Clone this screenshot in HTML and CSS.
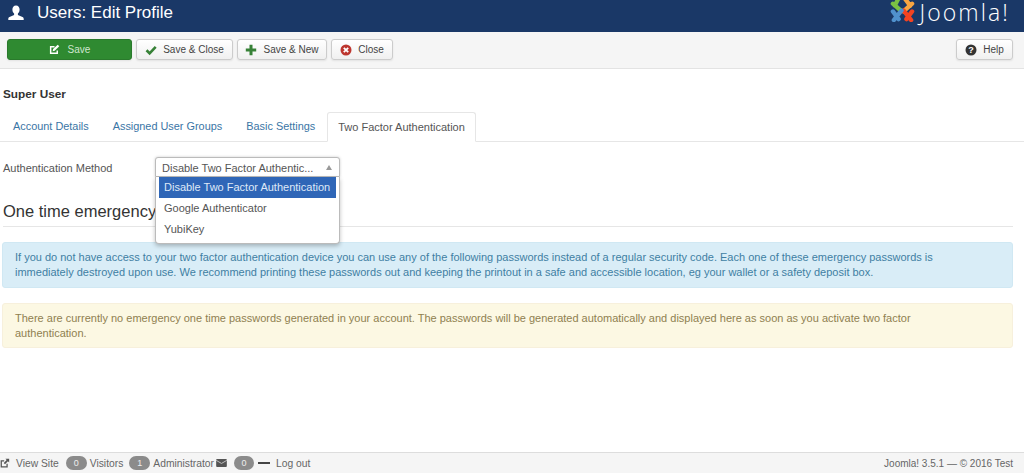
FILE: index.html
```html
<!DOCTYPE html>
<html lang="en">
<head>
<meta charset="utf-8">
<title>Users: Edit Profile</title>
<link rel="stylesheet" href="styles.css">
</head>
<body>
<div class="page">
  <header class="topbar">
    <svg class="user-icon" viewBox="0 0 16 16" width="16" height="16"><path fill="#fff" d="M8 0.5c2.3 0 3.6 1.7 3.6 4 0 1.7-.7 3.3-1.7 4.1v1.3l4.6 2c.8.4 1.2 1 1.2 2v1H0.300v-1c0-1 .4-1.600 1.200-2l4.600-2V8.600C5.100 7.800 4.400 6.200 4.400 4.500c0-2.300 1.300-4 3.600-4z"/></svg>
    <h1 class="title">Users: Edit Profile</h1>
    <div class="brand">
      <svg class="brand-mark" viewBox="0 0 26 26" width="25" height="25">
        <g fill="none" stroke-width="4.500" stroke-linecap="round">
          <path stroke="#7ac143" d="M3 7 L11 14 M9 1 L5 9"/>
          <path stroke="#f9a541" d="M23 7 L14 15 M15 1 L21 9"/>
          <path stroke="#f44321" d="M22 24 L14 14 M23 15 L17 23"/>
          <path stroke="#5091cd" d="M4 24 L12 14 M3 15 L9 23"/>
        </g>
      </svg>
      <span class="brand-name">Joomla!</span>
    </div>
  </header>

  <nav class="toolbar">
    <button class="btn btn-save" type="button">
      <svg viewBox="0 0 12 12" width="11" height="11"><path fill="none" stroke="#fff" stroke-width="1.600" d="M9 7v3.200H1.800V3H6"/><path fill="#fff" d="M4.500 5.500 9.500 .8l1.700 1.700-5 4.800-2.200.5z"/></svg>
      <span>Save</span>
    </button>
    <button class="btn w-close" type="button">
      <svg viewBox="0 0 12 12" width="12" height="12"><path fill="none" stroke="#378137" stroke-width="2.600" d="M1.500 6.300 4.600 9.300 10.700 2.800"/></svg>
      <span>Save &amp; Close</span>
    </button>
    <button class="btn w-new" type="button">
      <svg viewBox="0 0 12 12" width="12" height="12"><path fill="#378137" d="M4.500 .8h3v3.700h3.700v3H7.500v3.700h-3V7.500H.8v-3h3.700z"/></svg>
      <span>Save &amp; New</span>
    </button>
    <button class="btn w-cancel" type="button">
      <svg viewBox="0 0 12 12" width="12" height="12"><circle cx="6" cy="6" r="5.500" fill="#bd362f"/><path stroke="#fff" stroke-width="1.800" d="M3.800 3.800 8.200 8.200M8.200 3.800 3.800 8.200"/></svg>
      <span>Close</span>
    </button>
    <button class="btn w-help" type="button">
      <svg viewBox="0 0 12 12" width="12" height="12"><circle cx="6" cy="6" r="5.500" fill="#333"/><text x="6" y="9" class="help-q">?</text></svg>
      <span>Help</span>
    </button>
  </nav>

  <main class="content">
    <h2 class="user-name">Super User</h2>
    <ul class="tabs">
      <li class="tab">Account Details</li>
      <li class="tab">Assigned User Groups</li>
      <li class="tab">Basic Settings</li>
      <li class="tab tab-active">Two Factor Authentication</li>
    </ul>
    <div class="field">
      <label class="field-label">Authentication Method</label>
      <div class="select">
        <div class="select-head">
          <span>Disable Two Factor Authentic...</span>
          <i class="caret"></i>
        </div>
        <ul class="select-menu">
          <li class="option option-on">Disable Two Factor Authentication</li>
          <li class="option">Google Authenticator</li>
          <li class="option">YubiKey</li>
        </ul>
      </div>
    </div>
    <h3 class="section">One time emergency passwords</h3>
    <div class="alert alert-info">If you do not have access to your two factor authentication device you can use any of the following passwords instead of a regular security code. Each one of these emergency passwords is immediately destroyed upon use. We recommend printing these passwords out and keeping the printout in a safe and accessible location, eg your wallet or a safety deposit box.</div>
    <div class="alert alert-warn">There are currently no emergency one time passwords generated in your account. The passwords will be generated automatically and displayed here as soon as you activate two factor authentication.</div>
  </main>

  <footer class="status">
    <svg viewBox="0 0 12 12" width="10" height="10"><path fill="none" stroke="#555" stroke-width="1.500" d="M8.500 7v3.500H1.500V3.500H5"/><path fill="#555" d="M6.500 1H11v4.500L9.500 4 6 7.500 4.500 6 8 2.500z"/></svg>
    <span class="s-link s-view">View Site</span>
    <span class="badge">0</span><span class="s-link">Visitors</span>
    <span class="badge">1</span><span class="s-link s-admin">Administrator</span>
    <svg class="mail" viewBox="0 0 12 9" width="11" height="8"><rect width="12" height="9" rx="1" fill="#555"/><path d="M0 1.500 6 5l6-3.500" stroke="#ccc" fill="none"/></svg>
    <span class="badge">0</span>
    <i class="minus"></i>
    <span class="s-link">Log out</span>
    <span class="copy">Joomla! 3.5.1 — © 2016 Test</span>
  </footer>
</div>
</body>
</html>
```
FILE: styles.css
```css
* { box-sizing: border-box; }
html, body { margin: 0; padding: 0; }
body { background: #fff; font-family: "Liberation Sans", Arial, sans-serif; font-size: 11px; color: #555; }
ul { list-style: none; margin: 0; padding: 0; }
.page { width: 1024px; height: 473px; display: flex; flex-direction: column; overflow: hidden; }

.topbar { height: 32px; flex: none; background: #1a3867; display: flex; align-items: center; padding: 0 14px 7px 8px; overflow: hidden; }
.user-icon { flex: none; margin-right: 13px; }
.title { margin: 0; font-size: 17px; line-height: 20px; font-weight: 400; color: #fff; }
.brand { margin-left: auto; display: flex; align-items: flex-start; gap: 4px; height: 22px; }
.brand-mark { margin-top: -5px; }
.brand-name { font-family: "Open Sans", sans-serif; font-weight: 300; font-size: 23px; line-height: 20px; letter-spacing: 2.100px; color: #fff; }

.toolbar { height: 37px; flex: none; background: #f5f5f5; border-bottom: 1px solid #e3e3e3; display: flex; align-items: center; padding: 0 11px 1px 7px; gap: 4px; }
.btn { height: 21px; display: flex; align-items: center; justify-content: center; gap: 6px; padding: 0; background: linear-gradient(#fff, #f0f0f0); border: 1px solid #ccc; border-radius: 3px; box-shadow: 0 1px 2px rgba(0,0,0,.08); font: 10px "Liberation Sans", Arial, sans-serif; color: #444; }
.btn-save { width: 125px; background: #2f8a31; border-color: #2a7a2c; color: #cfe6cf; gap: 8px; }
.w-close { width: 97px; }
.w-new { width: 90px; }
.w-cancel { width: 62px; }
.w-help { width: 57px; margin-left: auto; }
.help-q { fill: #fff; font: bold 9px "Liberation Sans", sans-serif; text-anchor: middle; }

.content { flex: 1; padding: 0 11px 0 2px; }
.user-name { margin: 19px 0 0 1px; font-size: 11.800px; line-height: 13px; font-weight: 700; color: #333; }
.tabs { display: flex; margin: 11px -11px 0 -2px; padding-left: 1px; height: 30px; border-bottom: 1px solid #e6e6e6; }
.tab { padding: 0 12px; line-height: 28px; color: #3a75a5; font-size: 10.900px; }
.tab-active { height: 30px; background: #fff; border: 1px solid #e6e6e6; border-bottom-color: #fff; border-radius: 3px 3px 0 0; color: #555; padding: 0 10px; font-size: 11px; }

.field { display: flex; height: 20px; margin-top: 15px; position: relative; z-index: 2; }
.field-label { width: 153px; padding-top: 5px; padding-left: 1px; line-height: 13px; color: #555; }
.select { width: 185px; position: relative; }
.select-head { height: 20px; border: 1px solid #bbb; border-radius: 3px 3px 0 0; background: #fff; display: flex; align-items: center; justify-content: space-between; padding: 1px 7px 0 6px; color: #555; box-shadow: 0 0 3px rgba(0,0,0,.2); }
.caret { width: 0; height: 0; border: 3.500px solid transparent; border-top: 0; border-bottom: 5px solid #999; }
.select-menu { position: absolute; top: 20px; left: 0; width: 185px; height: 67px; background: #fff; border: 1px solid #bbb; border-top: 0; border-radius: 0 0 4px 4px; padding: 0 3px; box-shadow: 0 2px 4px rgba(0,0,0,.25); }
.option { height: 21px; line-height: 20px; padding: 0 5px; color: #555; white-space: nowrap; }
.option-on { background: #2f66b7; color: #dfe9f8; }

.section { margin: 23px 0 0 1px; font-size: 16.500px; line-height: 22px; font-weight: 400; color: #333; height: 27px; border-bottom: 1px solid #e6e6e6; }
.alert { padding: 7px 35px 7px 12px; line-height: 15px; border: 1px solid; border-radius: 3px; height: 46px; }
.alert-info { margin-top: 15px; background: #d9edf7; border-color: #d0e8f3; color: #3f7fa3; }
.alert-warn { margin-top: 15px; height: 45px; background: #fcf8e3; border-color: #f7f0dc; color: #8f8050; }

.status { height: 21px; flex: none; background: #f5f5f5; border-top: 1px solid #ddd; display: flex; align-items: center; padding: 0 11px 0 0; color: #666; font-size: 10.300px; }
.s-link { margin-right: 6px; }
.s-view { margin-left: 6px; margin-right: 7px; }
.s-admin { margin-right: 2px; }
.badge { width: 21px; height: 14px; border-radius: 7px; background: #8b8b8b; color: #eee; text-align: center; line-height: 14px; font-size: 9px; margin-right: 3px; }
.mail { margin-right: 7px; }
.mail + .badge { width: 20px; margin-right: 4px; }
.minus { width: 12px; height: 2.500px; background: #444; margin-right: 6px; }
.copy { margin-left: auto; font-size: 10px; }
```
